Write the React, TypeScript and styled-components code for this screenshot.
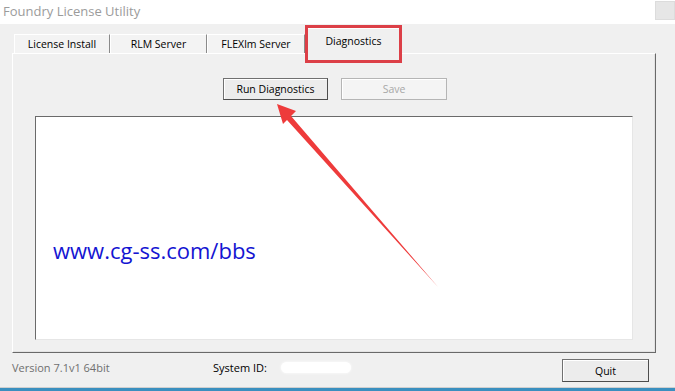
import React from 'react';
import styled, { createGlobalStyle } from 'styled-components';

const GlobalStyle = createGlobalStyle`
	html, body {
		margin: 0;
		padding: 0;
		background: #f0f0f0;
	}
	body {
		font-family: "Open Sans", "Noto Sans", "Liberation Sans", sans-serif;
		font-size: 11px;
		color: #000;
	}
`;

const Window = styled.div`
	position: relative;
	width: 675px;
	height: 391px;
	display: flex;
	flex-direction: column;
	overflow: hidden;
	background: #f0f0f0;
	border-bottom: 3px solid #3a8fbf;
	box-sizing: border-box;
`;

const TitleBar = styled.div`
	height: 24px;
	flex-shrink: 0;
	display: flex;
	justify-content: space-between;
	align-items: center;
	padding-left: 3px;
	background: #fff;
	.title {
		font-size: 13px;
		color: #9b9b9b;
		margin-top: -3px;
	}
`;

const CloseBox = styled.div`
	align-self: flex-start;
	width: 18px;
	height: 17px;
	margin-top: 1px;
	background: #e6e6e6;
	border: 1px solid #dcdcdc;
`;

const Body = styled.div`
	flex: 1;
	display: flex;
	flex-direction: column;
	padding: 4px 19px 0 12px;
	border-bottom: 1px solid #cfcfcf;
`;

const TabStrip = styled.div`
	position: relative;
	z-index: 1;
	height: 25px;
	display: flex;
	align-items: flex-end;
	padding-left: 2px;
`;

const Tab = styled.div<{ $active?: boolean; $w: number }>`
	position: relative;
	box-sizing: border-box;
	width: ${(p) => p.$w}px;
	height: ${(p) => (p.$active ? 26 : 19)}px;
	margin-bottom: ${(p) => (p.$active ? -1 : 0)}px;
	margin-left: ${(p) => (p.$active ? 1 : 0)}px;
	display: flex;
	justify-content: center;
	align-items: ${(p) => (p.$active ? 'flex-start' : 'center')};
	padding-top: ${(p) => (p.$active ? 5 : 0)}px;
	font-size: 10.5px;
	background: ${(p) => (p.$active ? '#f0f0f0' : '#f3f3f3')};
	border-top: 1px solid #fff;
	border-left: 1px solid #fff;
	border-right: 1px solid ${(p) => (p.$active ? '#6d6d6d' : '#8a8a8a')};
	&::after {
		content: '';
		display: ${(p) => (p.$active ? 'block' : 'none')};
		position: absolute;
		top: -4px;
		left: -2px;
		right: -2px;
		bottom: -9px;
		border: 3px solid #dc3f47;
	}
`;

const Panel = styled.div`
	box-sizing: border-box;
	height: 300px;
	display: flex;
	flex-direction: column;
	border-top: 1px solid #fff;
	border-left: 1px solid #fff;
	border-right: 1px solid #696969;
	border-bottom: 1px solid #696969;
	box-shadow: inset -1px -1px 0 #e3e3e3;
`;

const ButtonRow = styled.div`
	display: flex;
	gap: 13px;
	padding: 24px 0 0 210px;
`;

const WinButton = styled.button<{ $w: number; $h?: number }>`
	box-sizing: border-box;
	width: ${(p) => p.$w}px;
	height: ${(p) => p.$h ?? 22}px;
	padding: 0;
	font-family: inherit;
	font-size: 10.5px;
	color: #000;
	background: #ececec;
	border: 1px solid #707070;
	border-right-color: #4d4d4d;
	border-bottom-color: #4d4d4d;
	box-shadow: inset 1px 1px 0 #fff;
	&:disabled {
		color: #a8a8a8;
		background: #f4f4f4;
		border-color: #b5b5b5;
	}
`;

const OutputBox = styled.div`
	box-sizing: border-box;
	width: 598px;
	height: 224px;
	margin: 16px 0 0 22px;
	padding: 120px 0 0 17px;
	background: #fff;
	border-top: 1px solid #6a6a6a;
	border-left: 1px solid #6a6a6a;
	border-right: 1px solid #e6e6e6;
	border-bottom: 1px solid #e6e6e6;
	.watermark {
		font-size: 22px;
		color: #1414d2;
		line-height: 26px;
	}
`;

const Footer = styled.div`
	flex: 1;
	display: flex;
	align-items: center;
	.version {
		width: 201px;
		color: #6f6f6f;
		margin-top: -6px;
	}
	.system {
		display: flex;
		align-items: center;
		gap: 14px;
		margin-top: -6px;
	}
	.blur {
		width: 70px;
		height: 11px;
		border-radius: 6px;
		background: #fff;
		box-shadow: 0 0 3px #fff;
	}
`;

const QuitButton = styled(WinButton)`
	margin-left: auto;
	margin-right: 7px;
	margin-top: 1px;
`;

const Arrow = styled.svg`
	position: absolute;
	top: 0;
	left: 0;
	pointer-events: none;
`;

const App: React.FC = () => {
	return (
		<Window>
			<GlobalStyle />
			<TitleBar>
				<span className="title">Foundry License Utility</span>
				<CloseBox />
			</TitleBar>
			<Body>
				<TabStrip>
					<Tab $w={96}>License Install</Tab>
					<Tab $w={97}>RLM Server</Tab>
					<Tab $w={98}>FLEXlm Server</Tab>
					<Tab $w={95} $active>
						Diagnostics
					</Tab>
				</TabStrip>
				<Panel>
					<ButtonRow>
						<WinButton type="button" $w={105}>
							Run Diagnostics
						</WinButton>
						<WinButton type="button" $w={106} disabled>
							Save
						</WinButton>
					</ButtonRow>
					<OutputBox>
						<span className="watermark">www.cg-ss.com/bbs</span>
					</OutputBox>
				</Panel>
				<Footer>
					<span className="version">Version 7.1v1 64bit</span>
					<span className="system">
						System ID:
						<span className="blur" />
					</span>
					<QuitButton type="button" $w={87} $h={23}>
						Quit
					</QuitButton>
				</Footer>
			</Body>
			<Arrow width="675" height="391" viewBox="0 0 675 391">
				<polygon
					points="277,104 296,111 291,116 438,287 287,120 283,124"
					fill="#ee3b3b"
				/>
			</Arrow>
		</Window>
	);
};

export default App;
